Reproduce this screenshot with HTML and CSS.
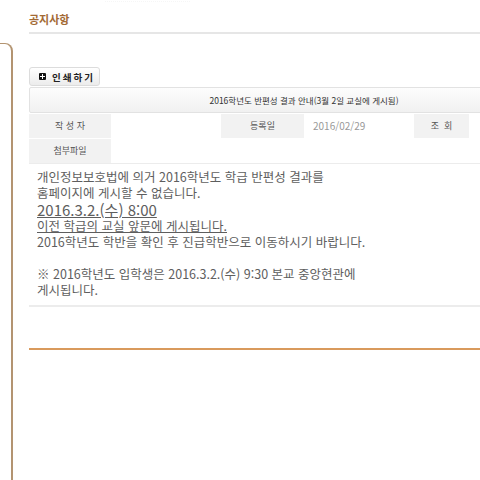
FILE: index.html
```html
<!DOCTYPE html>
<html lang="ko">
<head>
  <meta charset="utf-8">
  <meta name="viewport" content="width=device-width, initial-scale=1.0">
  <title>공지사항</title>
  <link rel="stylesheet" href="styles.css">
</head>
<body>
  <div class="top-dots"></div>
  <div class="wrap">
    <!-- left frame -->
    <div class="side"></div>

    <div class="main">
      <h2 class="board-title">공지사항</h2>

      <a href="#" class="btn-print"><span class="ico-plus"></span>인쇄하기</a>

      <div class="view">
        <div class="subject">2016학년도 반편성 결과 안내(3월 2일 교실에 게시됨)</div>

        <div class="info">
          <div class="label">작 성 자</div>
          <div class="value"></div>
          <div class="label">등록일</div>
          <div class="value date">2016/02/29</div>
          <div class="label">조 &nbsp;회</div>
          <div class="value"></div>

          <div class="label">첨부파일</div>
          <div class="value span"></div>
        </div>

        <div class="content">
          <p>개인정보보호법에 의거 2016학년도 학급 반편성 결과를<br>홈페이지에 게시할 수 없습니다.</p>
          <p class="big"><u>2016.3.2.(수) 8:00</u></p>
          <p><u>이전 학급의 교실 앞문에 게시됩니다.</u><br>2016학년도 학반을 확인 후 진급학반으로 이동하시기 바랍니다.</p>
          <p class="gap">※ 2016학년도 입학생은 2016.3.2.(수) 9:30 본교 중앙현관에<br>게시됩니다.</p>
        </div>
      </div>

      <div class="foot-line"></div>
    </div>
  </div>
</body>
</html>
```

FILE: styles.css
```css
body {
  margin: 0;
  padding: 0;
  background-color: #ffffff;
  font-family: "Noto Sans CJK KR", "Noto Sans", sans-serif;
  color: #555;
  overflow: hidden;
}
.top-dots {
  position: absolute;
  top: 1px;
  left: 105px;
  width: 85px;
  border-top: 1px dotted #f6f6f6;
}
.wrap {
  display: flex;
  align-items: flex-start;
  height: 480px;
  overflow: hidden;
}
.side {
  flex: 0 0 auto;
  width: 11px;
  height: 480px;
  margin-top: 43px;
  border-top: 1px solid #b39471;
  border-right: 2px solid #b39471;
  border-top-right-radius: 8px;
}
.main {
  flex: 0 0 auto;
  width: 550px;
  padding-left: 16px;
}
.board-title {
  margin: 0;
  padding-top: 11px;
  height: 21px;
  font-size: 11px;
  line-height: 16px;
  font-weight: bold;
  color: #a36a34;
  border-bottom: 2px solid #e6e6e6;
}
.btn-print {
  display: inline-flex;
  align-items: center;
  gap: 6px;
  margin-top: 33px;
  height: 17px;
  padding: 0 4px 0 9px;
  border: 1px solid #dcdcdc;
  border-radius: 3px;
  background: linear-gradient(#ffffff, #ececec);
  font-size: 9.5px;
  font-weight: bold;
  letter-spacing: 2px;
  color: #222;
  text-decoration: none;
}
.ico-plus {
  position: relative;
  width: 7px;
  height: 7px;
  border-radius: 1px;
  background-color: #111;
}
.ico-plus::before,
.ico-plus::after {
  content: "";
  position: absolute;
  background-color: #fff;
}
.ico-plus::before {
  left: 1px;
  top: 3px;
  width: 5px;
  height: 1px;
}
.ico-plus::after {
  left: 3px;
  top: 1px;
  width: 1px;
  height: 5px;
}
.view {
  margin-top: 1px;
}
.subject {
  height: 24px;
  line-height: 24px;
  border: 1px solid #e2e2e2;
  border-radius: 2px;
  background: linear-gradient(#fdfdfd, #f1f1f1);
  text-align: center;
  font-size: 8.5px;
  color: #333;
}
.info {
  display: grid;
  grid-template-columns: 82px 110px 83px 110px 55px 1fr;
  grid-auto-rows: 24px;
  row-gap: 1px;
  margin-top: 1px;
  border-bottom: 1px solid #ececec;
}
.label {
  background-color: #f2f2f2;
  text-align: center;
  line-height: 24px;
  font-size: 9px;
  color: #555;
}
.value {
  line-height: 24px;
  padding-left: 9px;
  font-size: 10px;
  color: #999;
}
.value.span {
  grid-column: span 5;
}
.content {
  padding: 5px 8px 7px;
  border-bottom: 2px solid #ececec;
  font-size: 12.5px;
  line-height: 16px;
  color: #5e5e5e;
}
.content p {
  margin: 0;
}
.content .big {
  font-size: 15px;
  line-height: 17px;
}
.content .gap {
  margin-top: 16px;
}
.foot-line {
  margin-top: 41px;
  border-top: 2px solid #d99a5c;
}
```
